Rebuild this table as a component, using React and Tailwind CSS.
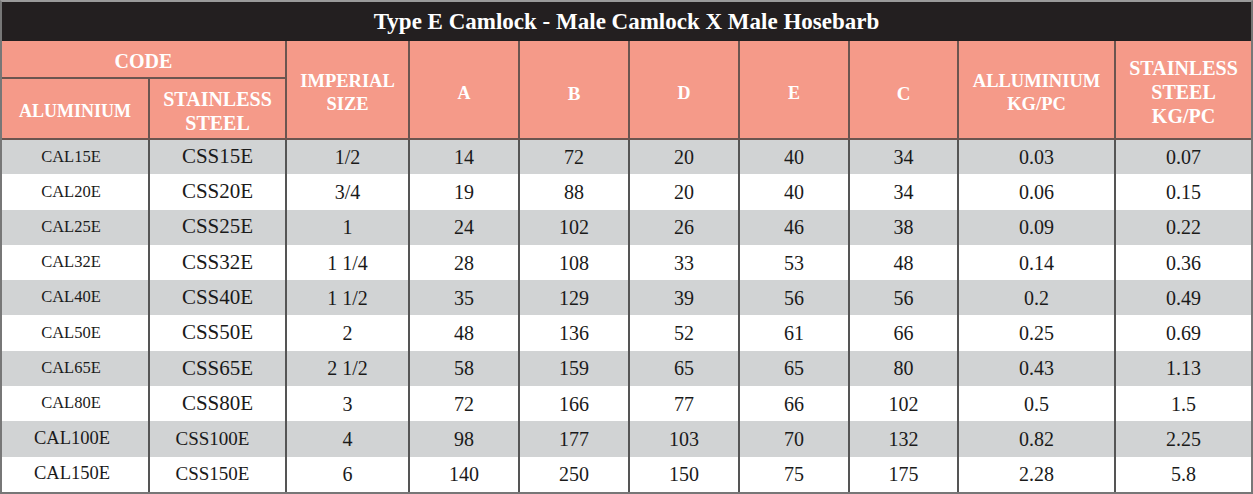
const rows = [
  ['CAL15E', 'CSS15E', '1/2', '14', '72', '20', '40', '34', '0.03', '0.07'],
  ['CAL20E', 'CSS20E', '3/4', '19', '88', '20', '40', '34', '0.06', '0.15'],
  ['CAL25E', 'CSS25E', '1', '24', '102', '26', '46', '38', '0.09', '0.22'],
  ['CAL32E', 'CSS32E', '1 1/4', '28', '108', '33', '53', '48', '0.14', '0.36'],
  ['CAL40E', 'CSS40E', '1 1/2', '35', '129', '39', '56', '56', '0.2', '0.49'],
  ['CAL50E', 'CSS50E', '2', '48', '136', '52', '61', '66', '0.25', '0.69'],
  ['CAL65E', 'CSS65E', '2 1/2', '58', '159', '65', '65', '80', '0.43', '1.13'],
  ['CAL80E', 'CSS80E', '3', '72', '166', '77', '66', '102', '0.5', '1.5'],
  ['CAL100E', 'CSS100E', '4', '98', '177', '103', '70', '132', '0.82', '2.25'],
  ['CAL150E', 'CSS150E', '6', '140', '250', '150', '75', '175', '2.28', '5.8'],
]

const widths = ['w-[147px]', 'w-[137px]', 'w-[123px]', 'w-[110px]', 'w-[110px]', 'w-[110px]', 'w-[110px]', 'w-[109px]', 'w-[157px]', 'w-[136px]']

export default function App() {
  const th = "border-2 border-[#6b5550] text-white font-bold font-['Liberation_Serif',serif] leading-[23px] align-middle text-center p-0"
  const td = "border-x-2 border-[#555555] text-center align-middle text-[#1a1a1a] font-['Liberation_Serif',serif] p-0"

  return (
    <div className="w-[1253px] h-[494px] bg-white font-['Liberation_Serif',serif]">
      <div className="border-2 border-[#777777] border-t-[#9a9a9a]">
        <div className="h-[39px] bg-[#231f20] flex items-center justify-center text-white font-bold text-[23px] pt-[2px]">
          Type E Camlock - Male Camlock X Male Hosebarb
        </div>
        <table className="w-full table-fixed border-collapse">
          <colgroup>
            {widths.map((w, i) => (
              <col key={i} className={w} />
            ))}
          </colgroup>
          <thead className="bg-[#f59a89]">
            <tr className="h-[37px]">
              <th colSpan={2} className={`${th} border-t-0 border-l-0 text-[20px] pt-[5px]`}>CODE</th>
              <th rowSpan={2} className={`${th} border-t-0 text-[18.5px] pt-[6px]`}>IMPERIAL<br />SIZE</th>
              <th rowSpan={2} className={`${th} border-t-0 text-[18px] pt-[8px]`}>A</th>
              <th rowSpan={2} className={`${th} border-t-0 text-[19px] pt-[8px]`}>B</th>
              <th rowSpan={2} className={`${th} border-t-0 text-[18px] pt-[8px]`}>D</th>
              <th rowSpan={2} className={`${th} border-t-0 text-[18px] pt-[8px]`}>E</th>
              <th rowSpan={2} className={`${th} border-t-0 text-[19px] pt-[8px]`}>C</th>
              <th rowSpan={2} className={`${th} border-t-0 text-[18.5px] pt-[6px]`}>ALLUMINIUM<br />KG/PC</th>
              <th rowSpan={2} className={`${th} border-t-0 border-r-0 text-[20px] leading-[24px] pt-[4px]`}>STAINLESS<br />STEEL<br />KG/PC</th>
            </tr>
            <tr className="h-[61px]">
              <th className={`${th} border-l-0 text-[18px] pt-[6px]`}>ALUMINIUM</th>
              <th className={`${th} text-[20px] leading-[24px] pt-[4px]`}>STAINLESS<br />STEEL</th>
            </tr>
          </thead>
          <tbody>
            {rows.map((r, i) => (
              <tr key={r[0]} className={`h-[35.3px] ${i % 2 === 0 ? 'bg-[#d1d3d4]' : 'bg-white'}`}>
                {r.map((v, j) => {
                  let size = 'text-[20px]'
                  if (j === 0) size = i >= 8 ? 'text-[18.5px] pr-[6px]' : 'text-[16.5px] pr-[8px]'
                  if (j === 1) size = i >= 8 ? 'text-[19px] pr-[10px]' : 'text-[21px]'
                  return (
                    <td key={j} className={`${td} ${size} ${j === 0 ? 'border-l-0' : ''} ${j === 9 ? 'border-r-0' : ''}`}>
                      {v}
                    </td>
                  )
                })}
              </tr>
            ))}
          </tbody>
        </table>
      </div>
    </div>
  )
}
